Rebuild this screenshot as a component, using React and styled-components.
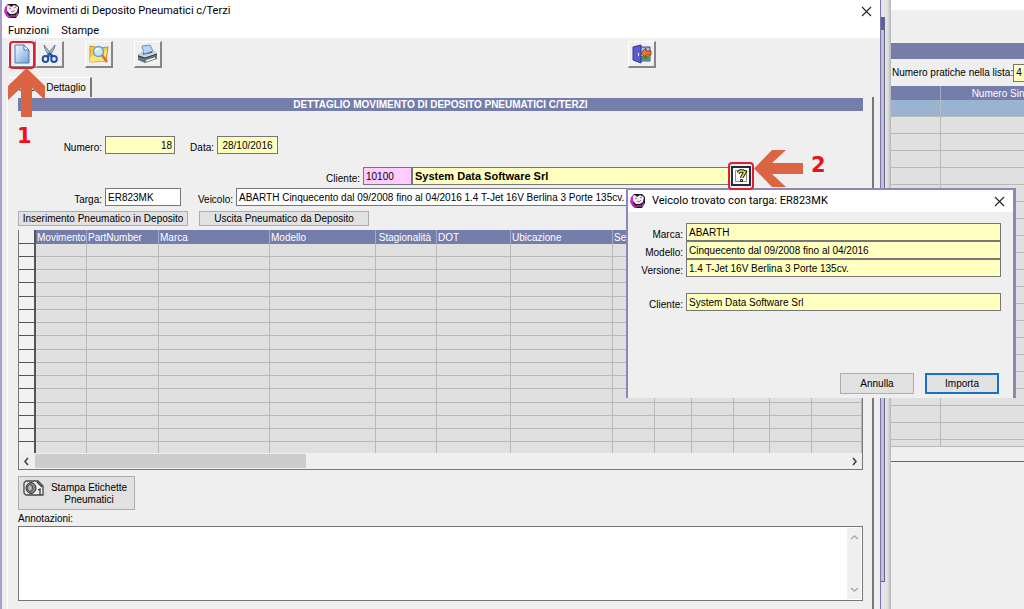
import styled, { createGlobalStyle } from 'styled-components';

const GlobalStyle = createGlobalStyle`
  *, *::before, *::after {
    box-sizing: border-box;
  }

  body {
    margin: 0;
    background: #efefef;
    color: #000;
    font: 10px/13px "Liberation Sans", Arial, sans-serif;
  }

  button, input, textarea {
    font: inherit;
    color: inherit;
    border-radius: 0;
    margin: 0;
  }
`;

const Desktop = styled.div`
  position: relative;
  display: flex;
  min-height: 100vh;
  overflow: hidden;
  background: #efefef;
`;

const MainWindow = styled.main`
  flex: 1;
  min-width: 0;
  display: flex;
  flex-direction: column;
  border-left: 2px solid #a9a0c8;
  border-right: 1px solid #7d73a8;
  background: #efefef;
`;

const TitleBar = styled.header`
  display: flex;
  align-items: center;
  gap: 6px;
  height: 22px;
  padding: 0 8px 0 2px;
  background: #fff;
`;

const Title = styled.h1`
  flex: 1;
  margin: 0;
  font: 11px/16px Roboto, sans-serif;
`;

const CloseButton = styled.button`
  display: flex;
  padding: 0;
  border: none;
  background: none;
`;

const MenuBar = styled.nav`
  display: flex;
  gap: 12px;
  height: 16px;
  padding-left: 6px;
  background: #fff;
  font: 11px/18px Roboto, sans-serif;

  a {
    color: inherit;
    text-decoration: none;
  }
`;

const Toolbar = styled.div`
  display: flex;
  height: 39px;
  padding: 3px 6px;
`;

const ToolButton = styled.button`
  display: flex;
  align-items: center;
  justify-content: center;
  width: 28px;
  height: 27px;
  padding: 0;
  margin-left: ${({ $space }) => $space || 0}px;
  background: #f0f0f0;
  border: 1px solid #fff;
  border-right: 2px solid #868686;
  border-bottom: 2px solid #868686;
`;

const Tabs = styled.div`
  display: flex;
  height: 20px;
  padding-left: 6px;
`;

const Tab = styled.button`
  width: ${({ $width }) => $width}px;
  padding: 0;
  background: #efefef;
  border: none;
  border-top: 1px solid #fff;
  border-right: ${({ $active }) => ($active ? '2px solid #777' : 'none')};
`;

const Panel = styled.section`
  flex: 1;
  margin: 0 6px 0 5px;
  padding: 1px 9px 8px 10px;
  border-left: 1px solid #fff;
  border-right: 2px solid #777;
`;

const Heading = styled.h2`
  margin: 0 0 25px;
  background: #757dab;
  color: #fff;
  font-size: 10px;
  line-height: 13px;
  text-align: center;
`;

const FormRow = styled.div`
  display: flex;
  align-items: center;
  height: 18px;
  margin-bottom: ${({ $after }) => $after || 3}px;
`;

const FieldLabel = styled.label`
  width: ${({ $width }) => $width}px;
  padding: 4px 3px 0 0;
  text-align: right;
  white-space: nowrap;
`;

const Field = styled.input`
  width: ${({ $width }) => ($width ? `${$width}px` : 'auto')};
  flex: ${({ $width }) => ($width ? 'none' : 1)};
  min-width: 0;
  height: 18px;
  padding: 0 2px;
  border: 1px solid #777;
  outline: none;
  background: ${({ $tone }) => $tone || '#fff'};
  text-align: ${({ $align }) => $align || 'left'};
  font-size: ${({ $bold }) => ($bold ? 11 : 10)}px;
  font-weight: ${({ $bold }) => ($bold ? 'bold' : 'normal')};
`;

const LookupButton = styled.button`
  display: flex;
  align-items: center;
  justify-content: center;
  width: 20px;
  height: 20px;
  padding: 0;
  margin: 0 112px 0 2px;
  background: #fff;
  border: 2px solid #2b2b35;
`;

const Actions = styled.div`
  display: flex;
  gap: 11px;
  margin: 5px 0 4px;
`;

const PlainButton = styled.button`
  width: ${({ $width }) => $width}px;
  height: ${({ $height }) => $height}px;
  padding: 0;
  background: #e1e1e1;
  border: ${({ $primary }) => ($primary ? '2px solid #1b6fc4' : '1px solid #adadad')};
  white-space: nowrap;
`;

const Grid = styled.div`
  border: 1px solid #777;
  border-top: none;
`;

const GridTable = styled.table`
  width: 100%;
  table-layout: fixed;
  border-collapse: separate;
  border-spacing: 0;

  th {
    height: 14px;
    padding: 0 0 0 1px;
    background: #757dab;
    border-right: 1px solid #a5a9c8;
    color: #fff;
    font-weight: normal;
    line-height: 13px;
    text-align: left;
    white-space: nowrap;
  }

  td {
    height: 13px;
    padding: 0;
    background: #e0e0e0;
    border-right: 1px solid #b9b9b9;
    border-bottom: 1px solid #b9b9b9;
  }

  tr:nth-child(4n) td {
    height: 14px;
  }

  tr:last-child td {
    height: 11px;
    border-bottom: none;
  }

  tr > :first-child {
    background: #f2f2f2;
    border-right: 2px solid #555;
    border-bottom: 1px solid #555;
  }
`;

const ScrollTrack = styled.div`
  display: flex;
  align-items: center;
  justify-content: space-between;
  height: 16px;
  padding: 0 3px;
  background: #efefef;
`;

const ScrollThumb = styled.div`
  width: 271px;
  height: 14px;
  margin: 0 auto 0 4px;
  background: #cdcdcd;
`;

const LabelsButton = styled.button`
  display: flex;
  gap: 4px;
  width: 117px;
  height: 34px;
  margin: 6px 0 2px;
  padding: 3px 4px;
  background: #e1e1e1;
  border: 1px solid #adadad;
  line-height: 12px;

  svg {
    flex: none;
  }

  span {
    flex: 1;
    padding-top: 2px;
  }
`;

const NotesLabel = styled.label`
  display: block;
  line-height: 14px;
`;

const NotesBox = styled.div`
  display: flex;
  height: 75px;
  border: 1px solid #777;
  background: #fff;
`;

const Notes = styled.textarea`
  flex: 1;
  border: none;
  outline: none;
  resize: none;
  overflow: hidden;
`;

const NotesScroll = styled.div`
  display: flex;
  flex-direction: column;
  justify-content: space-between;
  align-items: center;
  width: 14px;
  margin: 1px 1px 1px 0;
  padding: 5px 0;
  background: #efefef;
`;

const EdgeStrip = styled.div`
  display: flex;
  flex-direction: column;
  width: 10px;
  padding: 17px 6px 27px 0;
  background: linear-gradient(90deg, #e4e4e8 50%, #dcdcdc 70%, #b4b4b4);

  &::before {
    content: "";
    height: 13px;
    background: #5c6396;
  }

  &::after {
    content: "";
    flex: 1;
    background: #c3c3d2;
    border-right: 1px solid #66668a;
    border-bottom: 1px solid #66668a;
  }
`;

const BackWindow = styled.aside`
  width: 133px;
  overflow: hidden;
  border-top: 10px solid #fff;
  background: #efefef;
`;

const BackBar = styled.div`
  height: 16px;
  margin-top: 33px;
  background: #757dab;
`;

const BackCount = styled.div`
  display: flex;
  align-items: center;
  width: 160px;
  height: 27px;
  padding-left: 1px;

  label {
    flex: none;
    white-space: nowrap;
  }
`;

const BackTable = styled.table`
  width: 184px;
  table-layout: fixed;
  border-spacing: 0;

  th {
    height: 14px;
    padding: 0;
    background: #757dab;
    border-right: 1px solid #a5a9c8;
    color: #fff;
    font-weight: normal;
    white-space: nowrap;
  }

  td {
    height: 17px;
    padding: 0;
    background: #e0e0e0;
    border-right: 1px solid #b9b9b9;
    border-bottom: 1px solid #b9b9b9;
  }

  tbody tr:first-child td {
    background: #99b3d1;
  }

  tbody tr:last-child td {
    height: 7px;
  }
`;

const BackFooter = styled.div`
  height: 15px;
  border-bottom: 1px solid #666;
`;

const Dialog = styled.section`
  position: absolute;
  top: 188px;
  right: 8px;
  width: 390px;
  height: 210px;
  background: #efefef;
  border: 1px solid #8f86b8;
  border-width: 2px 3px 0 2px;
`;

const DialogForm = styled.div`
  padding: 11px 12px 0 0;
`;

const DialogRow = styled.div`
  display: flex;
  align-items: center;
  margin-bottom: ${({ $after }) => $after || 0}px;
`;

const DialogButtons = styled.div`
  display: flex;
  justify-content: flex-end;
  gap: 11px;
  padding: 62px 14px 0 0;
`;

const Highlight = styled.div`
  position: absolute;
  top: ${({ $y }) => $y}px;
  left: ${({ $x }) => $x}px;
  width: 26px;
  height: 28px;
  border: 2px solid #dc1f33;
  border-radius: 4px;
`;

const Arrow = styled.svg`
  position: absolute;
  top: ${({ $y }) => $y}px;
  left: ${({ $x }) => $x}px;
  fill: #db6543;
`;

const StepNumber = styled.strong`
  position: absolute;
  top: ${({ $y }) => $y}px;
  left: ${({ $x }) => $x}px;
  color: #f0101c;
  font: bold 21px/24px "DejaVu Sans", sans-serif;
`;

const AppIcon = () => (
  <svg width="16" height="16" viewBox="0 0 16 16" aria-hidden="true">
    <path d="M4 1h8l3 3v6l-3 5H5l-3-3-1-6z" fill="#2a0f2b" />
    <path d="M1 4l3-3-1 9 4 5-4-1-3-5z" fill="#c22bc0" />
    <path d="M3 3l2-1 2 2 3-2 2 1 2 1-1 5-3 2H6L3 8z" fill="#f3eef3" />
    <path d="M5 5l2 1M10 5l2-1M7 8l2 1 2-2" stroke="#6a5a6a" strokeWidth=".8" fill="none" />
    <path d="M6 13h6l2-3" stroke="#a540a0" fill="none" strokeWidth="1.5" />
  </svg>
);

const CloseIcon = () => (
  <svg width="11" height="11" viewBox="0 0 11 11" aria-hidden="true">
    <path d="M1 1l9 9M10 1l-9 9" stroke="#222" strokeWidth="1.1" />
  </svg>
);

const NewIcon = () => (
  <svg width="18" height="20" viewBox="0 0 18 20" aria-hidden="true">
    <defs>
      <linearGradient id="sheet" x1="0" y1="0" x2="1" y2="1">
        <stop offset="0" stopColor="#f4faff" />
        <stop offset="1" stopColor="#6fa3d8" />
      </linearGradient>
    </defs>
    <path d="M2 1h9l5 5v13H2z" fill="url(#sheet)" stroke="#5279a8" />
    <path d="M11 1v5h5z" fill="#fff" stroke="#5279a8" />
  </svg>
);

const CutIcon = () => (
  <svg width="18" height="20" viewBox="0 0 18 20" aria-hidden="true">
    <path d="M3 1l1 4 5 8 2-2zM14 1l-1 4-5 8-2-2z" fill="#b7c6d6" stroke="#4f6479" strokeWidth=".8" />
    <path d="M7 11l2-1 3 2" stroke="#1b4fa8" strokeWidth="2" fill="none" />
    <ellipse cx="4.5" cy="15" rx="2.8" ry="3" fill="none" stroke="#1b4fa8" strokeWidth="2" />
    <ellipse cx="13" cy="15" rx="2.8" ry="3" fill="none" stroke="#1b4fa8" strokeWidth="2" />
  </svg>
);

const SearchIcon = () => (
  <svg width="22" height="20" viewBox="0 0 22 20" aria-hidden="true">
    <path d="M2 2l5 1 2 1 11-1-2 14-16 1z" fill="#f6cb45" stroke="#c78e1c" />
    <path d="M2 13l17-7-2 11-15 1z" fill="#ffe27a" />
    <path d="M14 11l5 7" stroke="#d4713c" strokeWidth="2.5" />
    <circle cx="10.5" cy="7.5" r="5" fill="#c9e9fb" stroke="#6d9fca" strokeWidth="1.5" />
    <path d="M7 7q1-3 4-2" stroke="#fff" strokeWidth="1.5" fill="none" />
  </svg>
);

const PrintIcon = () => (
  <svg width="22" height="20" viewBox="0 0 22 20" aria-hidden="true">
    <path d="M1 11l4-3 12-1 3 3v5l-12 4-7-3z" fill="#6a727c" />
    <path d="M1 11l4-3 12-1 3 3-12 4z" fill="#cdd2d9" />
    <path d="M6 10l9-2" stroke="#3b424b" strokeWidth="1.5" />
    <path d="M5 2l8-1 3 6-9 3z" fill="#b5d6f6" stroke="#5d95d4" />
    <path d="M1 12l7 2 12-4" stroke="#30363e" fill="none" />
    <path d="M9 17l9-3" stroke="#eef1f4" fill="none" strokeWidth="1.5" />
  </svg>
);

const ExitIcon = () => (
  <svg width="20" height="20" viewBox="0 0 20 20" aria-hidden="true">
    <path d="M8 3h10v14H8z" fill="#a3c8ef" stroke="#35457f" />
    <path d="M9 12h8v4H9z" fill="#3f9b45" />
    <path d="M1 3l8-2v18l-8-3z" fill="#5a5cd6" stroke="#33348c" />
    <path d="M6.5 9v3" stroke="#fff" />
    <path d="M9 9l5-5v3h5v4h-5v3z" fill="#f2742a" stroke="#8a2a12" strokeWidth=".8" />
  </svg>
);

const LookupIcon = () => (
  <svg width="16" height="16" viewBox="0 0 16 16" aria-hidden="true">
    <rect x="2.5" y="2.5" width="11" height="11" fill="#fff" stroke="#222" strokeDasharray="1 1" />
    <path d="M5 5l2-2h3l2 1-3 5v1" fill="none" stroke="#222" strokeWidth="3.5" />
    <path d="M5 5l2-2h3l2 1-3 5v1" fill="none" stroke="#e6de3a" strokeWidth="1.5" />
    <path d="M7.5 11.5h2v2h-2z" fill="#e6de3a" stroke="#222" />
  </svg>
);

const TyreIcon = () => (
  <svg width="21" height="17" viewBox="0 0 21 17" aria-hidden="true">
    <path d="M3 1h12l5 5v9H3L1 13V3z" fill="#f2f2f2" stroke="#444" strokeWidth="1.3" />
    <ellipse cx="8" cy="8" rx="5" ry="5.5" fill="#888" stroke="#333" />
    <ellipse cx="7" cy="8" rx="2.5" ry="3.5" fill="#bbb" stroke="#444" />
    <path d="M14 2l5 5M15 10l2-1v6" stroke="#333" fill="none" strokeWidth="1.3" />
  </svg>
);

const Chevron = ({ d, color = '#444' }) => (
  <svg width="9" height="9" viewBox="0 0 9 9" aria-hidden="true">
    <path d={d} fill="none" stroke={color} strokeWidth="1.6" />
  </svg>
);

const columns = [
  { name: '', width: 17 },
  { name: 'Movimento', width: 51 },
  { name: 'PartNumber', width: 72 },
  { name: 'Marca', width: 111 },
  { name: 'Modello', width: 106 },
  { name: 'Stagionalità', width: 61, align: 'right' },
  { name: 'DOT', width: 74 },
  { name: 'Ubicazione', width: 102 },
  { name: 'Serie', width: 42 },
  { name: '', width: 37 },
  { name: '', width: 42 },
  { name: '', width: 36 },
  { name: '', width: 42 },
  { name: '' },
];

const vehicle = [
  { id: 'marca', label: 'Marca:', value: 'ABARTH' },
  { id: 'modello', label: 'Modello:', value: 'Cinquecento dal 09/2008 fino al 04/2016' },
  { id: 'versione', label: 'Versione:', value: '1.4 T-Jet 16V Berlina 3 Porte 135cv.', after: 16 },
  { id: 'intestatario', label: 'Cliente:', value: 'System Data Software Srl' },
];

const HeadCell = styled.th`
  && {
    text-align: ${({ $align }) => $align || 'left'};
    padding-right: ${({ $align }) => ($align ? 5 : 0)}px;
  }
`;

const MovementsGrid = () => (
  <Grid>
    <GridTable>
      <colgroup>
        {columns.map((column, i) => (
          <col key={i} width={column.width} />
        ))}
      </colgroup>
      <thead>
        <tr>
          {columns.map((column, i) => (
            <HeadCell key={i} $align={column.align}>{column.name}</HeadCell>
          ))}
        </tr>
      </thead>
      <tbody>
        {Array.from({ length: 16 }, (_, row) => (
          <tr key={row}>
            {columns.map((_, i) => (
              <td key={i} />
            ))}
          </tr>
        ))}
      </tbody>
    </GridTable>
    <ScrollTrack>
      <Chevron d="M6 1L3 4.5L6 8" />
      <ScrollThumb />
      <Chevron d="M3 1L6 4.5L3 8" />
    </ScrollTrack>
  </Grid>
);

const PracticeList = () => (
  <BackWindow>
    <BackBar />
    <BackCount>
      <label htmlFor="pratiche">Numero pratiche nella lista:</label>
      <Field id="pratiche" $width={30} $tone="#ffffc0" defaultValue="4" readOnly />
    </BackCount>
    <BackTable>
      <colgroup>
        <col width="50" />
        <col width="134" />
      </colgroup>
      <thead>
        <tr>
          <th />
          <th>Numero Sinistro</th>
        </tr>
      </thead>
      <tbody>
        {Array.from({ length: 21 }, (_, row) => (
          <tr key={row}>
            <td />
            <td />
          </tr>
        ))}
      </tbody>
    </BackTable>
    <BackFooter />
  </BackWindow>
);

const VehicleDialog = () => (
  <Dialog role="dialog" aria-labelledby="dialog-title">
    <TitleBar>
      <AppIcon />
      <Title as="h2" id="dialog-title">Veicolo trovato con targa: ER823MK</Title>
      <CloseButton aria-label="Chiudi"><CloseIcon /></CloseButton>
    </TitleBar>
    <DialogForm>
      {vehicle.map(({ id, label, value, after }) => (
        <DialogRow key={id} $after={after}>
          <FieldLabel htmlFor={id} $width={58}>{label}</FieldLabel>
          <Field id={id} $tone="#ffffc0" defaultValue={value} readOnly />
        </DialogRow>
      ))}
    </DialogForm>
    <DialogButtons>
      <PlainButton $width={74} $height={21}>Annulla</PlainButton>
      <PlainButton $width={74} $height={21} $primary>Importa</PlainButton>
    </DialogButtons>
  </Dialog>
);

const App = () => (
  <>
    <GlobalStyle />
    <Desktop>
      <MainWindow>
        <TitleBar>
          <AppIcon />
          <Title>Movimenti di Deposito Pneumatici c/Terzi</Title>
          <CloseButton aria-label="Chiudi"><CloseIcon /></CloseButton>
        </TitleBar>
        <MenuBar>
          <a href="#funzioni">Funzioni</a>
          <a href="#stampe">Stampe</a>
        </MenuBar>
        <Toolbar>
          <ToolButton aria-label="Nuovo"><NewIcon /></ToolButton>
          <ToolButton aria-label="Taglia"><CutIcon /></ToolButton>
          <ToolButton aria-label="Cerca" $space={21}><SearchIcon /></ToolButton>
          <ToolButton aria-label="Stampa" $space={21}><PrintIcon /></ToolButton>
          <ToolButton aria-label="Esci" $space={466}><ExitIcon /></ToolButton>
        </Toolbar>
        <Tabs>
          <Tab $width={34}>Elenco</Tab>
          <Tab $width={50} $active>Dettaglio</Tab>
        </Tabs>
        <Panel>
          <Heading>DETTAGLIO MOVIMENTO DI DEPOSITO PNEUMATICI C/TERZI</Heading>
          <FormRow $after={13}>
            <FieldLabel htmlFor="numero" $width={87}>Numero:</FieldLabel>
            <Field id="numero" $width={70} $tone="#ffffc0" $align="right" defaultValue="18" readOnly />
            <FieldLabel htmlFor="data" $width={42}>Data:</FieldLabel>
            <Field id="data" $width={61} $tone="#ffffc0" $align="center" defaultValue="28/10/2016" readOnly />
          </FormRow>
          <FormRow>
            <FieldLabel htmlFor="cliente" $width={345}>Cliente:</FieldLabel>
            <Field id="cliente" $width={49} $tone="#ffccff" defaultValue="10100" />
            <Field aria-label="Nome cliente" $tone="#ffffc0" $bold defaultValue="System Data Software Srl" readOnly />
            <LookupButton aria-label="Cerca cliente"><LookupIcon /></LookupButton>
          </FormRow>
          <FormRow>
            <FieldLabel htmlFor="targa" $width={87}>Targa:</FieldLabel>
            <Field id="targa" $width={76} defaultValue="ER823MK" />
            <FieldLabel htmlFor="veicolo" $width={55}>Veicolo:</FieldLabel>
            <Field
              id="veicolo"
              $width={392}
              defaultValue="ABARTH Cinquecento dal 09/2008 fino al 04/2016 1.4 T-Jet 16V Berlina 3 Porte 135cv."
            />
          </FormRow>
          <Actions>
            <PlainButton $width={170} $height={15}>Inserimento Pneumatico in Deposito</PlainButton>
            <PlainButton $width={170} $height={15}>Uscita Pneumatico da Deposito</PlainButton>
          </Actions>
          <MovementsGrid />
          <LabelsButton>
            <TyreIcon />
            <span>Stampa Etichette Pneumatici</span>
          </LabelsButton>
          <NotesLabel htmlFor="annotazioni">Annotazioni:</NotesLabel>
          <NotesBox>
            <Notes id="annotazioni" />
            <NotesScroll>
              <Chevron d="M1 6L4.5 3L8 6" color="#aaa" />
              <Chevron d="M1 3L4.5 6L8 3" color="#aaa" />
            </NotesScroll>
          </NotesBox>
        </Panel>
      </MainWindow>
      <EdgeStrip />
      <PracticeList />
      <VehicleDialog />
      <Highlight $x={9} $y={41} />
      <Highlight $x={728} $y={162} />
      <Arrow $x={8} $y={68} width="38" height="50" viewBox="0 0 38 50">
        <path d="M18.5 0L37 18v14L24 20v29H13V20L0 32V18z" />
      </Arrow>
      <Arrow $x={754} $y={150} width="50" height="38" viewBox="0 0 50 38">
        <path d="M0 18.5L18 0h14L18 13h31v11H18l14 13H18z" />
      </Arrow>
      <StepNumber $x={17} $y={124}>1</StepNumber>
      <StepNumber $x={811} $y={153}>2</StepNumber>
    </Desktop>
  </>
);

export default App;
